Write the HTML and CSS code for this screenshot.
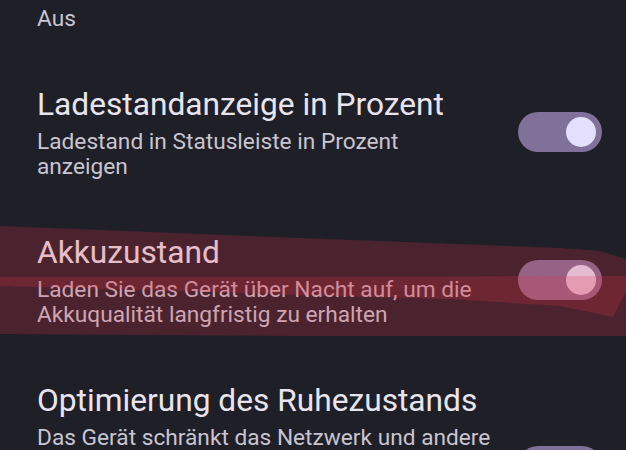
FILE: index.html
```html
<!DOCTYPE html>
<html lang="de">
<head>
<meta charset="utf-8">
<title>Akku</title>
<link rel="stylesheet" href="styles.css">
</head>
<body>
<div class="screen">
  <ul class="list">
    <li class="pref pref-cut">
      <div class="text">
        <div class="summary summary-first">Aus</div>
      </div>
    </li>
    <li class="pref">
      <div class="text">
        <div class="title">Ladestandanzeige in Prozent</div>
        <div class="summary">Ladestand in Statusleiste in Prozent anzeigen</div>
      </div>
      <div class="switch" role="switch" aria-checked="true"></div>
    </li>
    <li class="pref">
      <div class="text">
        <div class="title">Akkuzustand</div>
        <div class="summary">Laden Sie das Gerät über Nacht auf, um die Akkuqualität langfristig zu erhalten</div>
      </div>
      <div class="switch" role="switch" aria-checked="true"></div>
    </li>
    <li class="pref">
      <div class="text">
        <div class="title">Optimierung des Ruhezustands</div>
        <div class="summary">Das Gerät schränkt das Netzwerk und andere Funktionen ein, während Sie schlafen, um den Stromverbrauch zu senken. Ihre Schlafenszeit wird anhand Ihrer Nutzungsgewohnheiten ermittelt.</div>
      </div>
      <div class="switch" role="switch" aria-checked="true"></div>
    </li>
  </ul>
  <svg class="mark" viewBox="0 0 626 450" width="626" height="450" aria-hidden="true">
    <polygon class="stroke" points="0,226 300,238 560,248 600,251 626,259 626,336 300,336 0,334"/>
    <polygon class="stroke" points="0,277 300,277 626,276 626,292 613,317 560,306 450,299 300,295 150,290 0,286"/>
  </svg>
</div>
</body>
</html>
```

FILE: styles.css
```css
html, body {
  margin: 0;
  padding: 0;
  background: #1f1f28;
}

body {
  font-family: Roboto, "Noto Sans", "Liberation Sans", sans-serif;
}

.screen {
  position: relative;
  width: 626px;
  height: 450px;
  overflow: hidden;
  background: #1f1f28;
}

.list {
  list-style: none;
  margin: 0;
  padding: 0;
}

.pref {
  display: flex;
  align-items: center;
  gap: 24px;
  padding: 28px 24px 28px 37px;
}

.pref-cut {
  padding-top: 6px;
}

.text {
  flex: 1;
  min-width: 0;
}

.title {
  font-size: 31.7px;
  line-height: 36px;
  color: #e9e5ee;
}

.summary {
  font-size: 22.7px;
  line-height: 25px;
  color: #c8c5d1;
  margin-top: 6px;
}

.summary-first {
  margin-top: 0;
}

.switch {
  flex: none;
  width: 84px;
  height: 40px;
  box-sizing: border-box;
  border-radius: 20px;
  background: #7f7199;
  display: flex;
  align-items: center;
  justify-content: flex-end;
  padding-right: 6px;
  margin-top: -2px;
}

.switch::after {
  content: "";
  width: 30px;
  height: 30px;
  border-radius: 50%;
  background: #e4e0fc;
}

.mark {
  position: absolute;
  top: 0;
  left: 0;
  pointer-events: none;
}

.stroke {
  fill: rgba(232, 48, 70, 0.22);
}
```
